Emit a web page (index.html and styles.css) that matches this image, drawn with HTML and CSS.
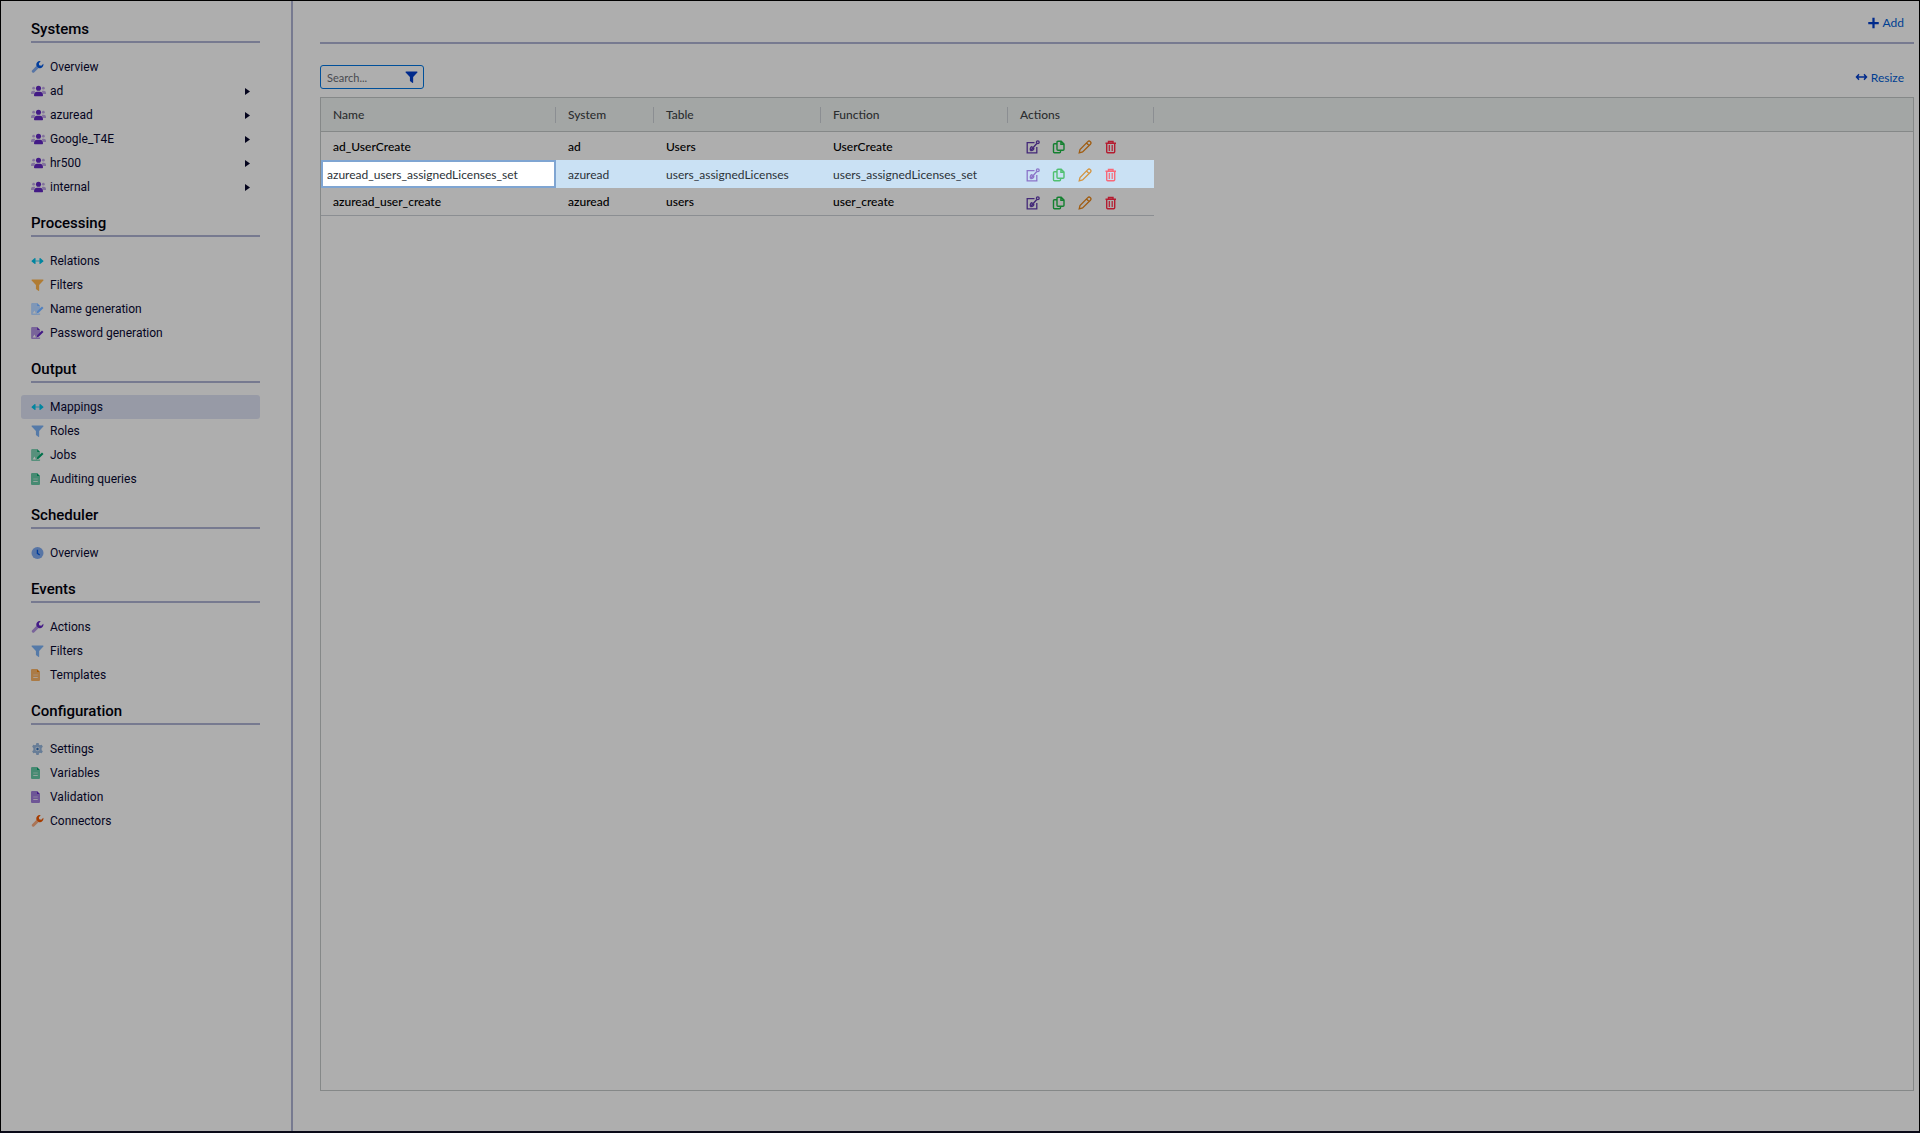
FILE: index.html
```html
<!DOCTYPE html>
<html lang="en">
<head>
<meta charset="utf-8">
<title>Mappings</title>
<link rel="stylesheet" href="styles.css">
</head>
<body>
<svg class="sprite" aria-hidden="true">
  <symbol id="wrench" viewBox="0 0 16 16"><path opacity=".5" d="M7.4 5.8 1 12.2a1.9 1.9 0 0 0 2.800 2.800L10.200 8.600z"/><path d="M15.700 3.700a4.600 4.600 0 0 1-6.200 5.500L6.800 6.500A4.600 4.600 0 0 1 12.300.300L9.800 2.900l.400 2.900 2.900.400z"/></symbol>
  <symbol id="users" viewBox="0 0 20 16"><g opacity=".4"><circle cx="3.500" cy="4.200" r="1.800"/><circle cx="16.500" cy="4.200" r="1.800"/><path d="M0 10.500C0 8.500 1.500 7.500 3 7.500h2l.500 1.500L3.500 12H0zM20 10.500c0-2-1.500-3-3-3h-2L14.500 9l2 3H20z"/></g><circle cx="10" cy="4.300" r="3.400"/><path d="M4 14c0-3.500 1.500-5 4-5h4c2.500 0 4 1.500 4 5 0 .700-.400 1-1 1H5c-.600 0-1-.300-1-1z"/></symbol>
  <symbol id="arrows" viewBox="0 0 16 16"><path opacity=".5" d="M5 7h6v2H5z"/><path d="M.200 7.500 4 4.200c.700-.500 1.400-.200 1.400.600v6.400c0 .800-.700 1.100-1.400.600L.200 8.500q-.400-.500 0-1zM15.800 7.500 12 4.200c-.700-.500-1.400-.200-1.400.600v6.400c0 .800.700 1.100 1.400.600l3.800-3.300q.400-.500 0-1z"/></symbol>
  <symbol id="resize" viewBox="0 0 16 16"><path d="M0 8l4-4.200 1.300 1.300L3.800 7h8.400l-1.500-1.900L12 3.800 16 8l-4 4.200-1.300-1.300L12.200 9H3.800l1.500 1.900L4 12.200z"/></symbol>
  <symbol id="filter" viewBox="0 0 16 16"><path d="M.800.500h14.400c.800 0 1.100.800.600 1.400L10.200 8v7.200c0 .700-.600 1-1.200.600l-2.600-2c-.300-.200-.500-.500-.500-.900V8L.200 1.900C-.300 1.300 0 .500.800.500z"/></symbol>
  <symbol id="filepen" viewBox="0 0 17 16"><path opacity=".5" fill-rule="evenodd" d="M1.500 0H8v4h4v3.500L7.500 12v2H12v1a1 1 0 0 1-1 1H1.500A1.500 1.500 0 0 1 0 14.500v-13A1.500 1.500 0 0 1 1.500 0zM2 14h4.500L4.500 10z"/><path d="M8 0l4 4H8zM14.500 4.500 16.500 6.500 10 13l-2.500.700.500-2.700z"/></symbol>
  <symbol id="file" viewBox="0 0 12 16"><path opacity=".6" fill-rule="evenodd" d="M1.500 0H8v4h4v10.500a1.500 1.500 0 0 1-1.500 1.500h-9A1.500 1.500 0 0 1 0 14.500v-13A1.500 1.500 0 0 1 1.500 0zM3 7.700v.700h6v-.700zM3 11v1h6v-1z"/><path d="M8 0l4 4H8z"/></symbol>
  <symbol id="clock" viewBox="0 0 16 16"><circle opacity=".5" cx="8" cy="8" r="8"/><path d="M7 3.500h1.800V8l2.600 2-.900 1.400L7 9z"/></symbol>
  <symbol id="gear" viewBox="0 0 16 16"><path opacity=".5" fill-rule="evenodd" d="M6.500 0h3l.500 2.300 1.300.700 2.300-.700 1.500 2.600L13.500 6.500v3l1.600 1.600-1.500 2.600-2.300-.700-1.300.700-.500 2.300h-3L6 13.700 4.700 13l-2.300.700-1.500-2.600 1.600-1.600v-3L.900 4.900l1.500-2.600L4.700 3 6 2.300zM8 5a3 3 0 1 0 0 6 3 3 0 0 0 0-6z"/><circle opacity=".2" cx="8" cy="8" r="3"/><circle cx="8" cy="8" r="1.600"/></symbol>
  <symbol id="plus" viewBox="0 0 16 16"><path d="M6.500 1h3v5.500H15v3H9.500V15h-3V9.500H1v-3h5.500z"/></symbol>
  <symbol id="caret" viewBox="0 0 5 7"><path d="M0 0 5 3.500 0 7z"/></symbol>
  <symbol id="edit" viewBox="0 0 14 14"><g fill="none" stroke="currentColor" stroke-width="1.300"><path d="M8.500 2.700H1.200v10.100h9.600V7M4.500 10.500c-.800-2 .300-4 2-3.700M4.500 10.500c2 .300 3.700-.800 3.300-2.500M5 10l5.800-6.500"/><circle cx="11.800" cy="2.200" r="1.400"/></g></symbol>
  <symbol id="copy" viewBox="0 0 14 14"><g fill="none" stroke="currentColor" stroke-width="1.400"><path d="M6 1.200h3.200l2.800 2.800v5.300c0 .700-.300 1-1 1H6c-.700 0-1-.300-1-1V2.200c0-.700.300-1 1-1zM8.900 1.200v3.100H12M4.800 3.700H2.500c-.700 0-1 .300-1 1v7.100c0 .700.300 1 1 1H7.500c.700 0 1-.300 1-1V10.500"/></g></symbol>
  <symbol id="pencil" viewBox="0 0 14 14"><g fill="none" stroke="currentColor" stroke-width="1.300"><path d="M1.200 12.800 2 9.500l7.800-7.900c1.700-1.600 4.200.800 2.600 2.600L4.600 12zM8.500 3l2.500 2.500"/></g></symbol>
  <symbol id="trash" viewBox="0 0 14 14"><g fill="none" stroke="currentColor" stroke-width="1.400"><path d="M1.500 3.200h10.500M4.500 3V1.500h4.500V3M2.700 3.500v8.300c0 .700.300 1 1 1h6c.700 0 1-.300 1-1V3.500"/><path stroke-width="1.200" d="M5.300 5v6M8.200 5v6"/></g></symbol>
</svg>
<div class="app">
  <nav class="sidebar">
    <h2>Systems</h2>
    <ul>
      <li><a href="#"><svg class="icon blue"><use href="#wrench"/></svg>Overview</a></li>
      <li><a href="#"><svg class="icon wide purple"><use href="#users"/></svg>ad<svg class="caret"><use href="#caret"/></svg></a></li>
      <li><a href="#"><svg class="icon wide purple"><use href="#users"/></svg>azuread<svg class="caret"><use href="#caret"/></svg></a></li>
      <li><a href="#"><svg class="icon wide purple"><use href="#users"/></svg>Google_T4E<svg class="caret"><use href="#caret"/></svg></a></li>
      <li><a href="#"><svg class="icon wide purple"><use href="#users"/></svg>hr500<svg class="caret"><use href="#caret"/></svg></a></li>
      <li><a href="#"><svg class="icon wide purple"><use href="#users"/></svg>internal<svg class="caret"><use href="#caret"/></svg></a></li>
    </ul>
    <h2>Processing</h2>
    <ul>
      <li><a href="#"><svg class="icon cyan"><use href="#arrows"/></svg>Relations</a></li>
      <li><a href="#"><svg class="icon sand"><use href="#filter"/></svg>Filters</a></li>
      <li><a href="#"><svg class="icon sky"><use href="#filepen"/></svg>Name generation</a></li>
      <li><a href="#"><svg class="icon purple"><use href="#filepen"/></svg>Password generation</a></li>
    </ul>
    <h2>Output</h2>
    <ul>
      <li><a href="#" class="active" aria-current="page"><svg class="icon cyan"><use href="#arrows"/></svg>Mappings</a></li>
      <li><a href="#"><svg class="icon steel"><use href="#filter"/></svg>Roles</a></li>
      <li><a href="#"><svg class="icon green"><use href="#filepen"/></svg>Jobs</a></li>
      <li><a href="#"><svg class="icon narrow green"><use href="#file"/></svg>Auditing queries</a></li>
    </ul>
    <h2>Scheduler</h2>
    <ul>
      <li><a href="#"><svg class="icon blue"><use href="#clock"/></svg>Overview</a></li>
    </ul>
    <h2>Events</h2>
    <ul>
      <li><a href="#"><svg class="icon purple"><use href="#wrench"/></svg>Actions</a></li>
      <li><a href="#"><svg class="icon steel"><use href="#filter"/></svg>Filters</a></li>
      <li><a href="#"><svg class="icon narrow orange"><use href="#file"/></svg>Templates</a></li>
    </ul>
    <h2>Configuration</h2>
    <ul>
      <li><a href="#"><svg class="icon navy"><use href="#gear"/></svg>Settings</a></li>
      <li><a href="#"><svg class="icon narrow green"><use href="#file"/></svg>Variables</a></li>
      <li><a href="#"><svg class="icon narrow purple"><use href="#file"/></svg>Validation</a></li>
      <li><a href="#"><svg class="icon rust"><use href="#wrench"/></svg>Connectors</a></li>
    </ul>
  </nav>
  <main class="main">
    <header class="topbar">
      <button type="button" class="link"><svg class="icon"><use href="#plus"/></svg>Add</button>
    </header>
    <div class="toolbar">
      <div class="search">
        <input type="text" placeholder="Search..." aria-label="Search">
        <svg class="icon"><use href="#filter"/></svg>
      </div>
      <button type="button" class="link"><svg class="icon"><use href="#resize"/></svg>Resize</button>
    </div>
    <div class="grid">
      <table>
        <colgroup><col class="c-name"><col class="c-system"><col class="c-table"><col class="c-function"><col class="c-actions"><col></colgroup>
        <thead>
          <tr><th><div>Name</div></th><th><div>System</div></th><th><div>Table</div></th><th><div>Function</div></th><th><div>Actions</div></th><td></td></tr>
        </thead>
        <tbody>
          <tr>
            <td>ad_UserCreate</td><td>ad</td><td>Users</td><td>UserCreate</td>
            <td><div class="actions"><button type="button" class="edit" aria-label="Edit"><svg><use href="#edit"/></svg></button><button type="button" class="copy" aria-label="Copy"><svg><use href="#copy"/></svg></button><button type="button" class="rename" aria-label="Rename"><svg><use href="#pencil"/></svg></button><button type="button" class="delete" aria-label="Delete"><svg><use href="#trash"/></svg></button></div></td><td class="rest"></td>
          </tr>
          <tr class="selected">
            <td class="editing"><input type="text" value="azuread_users_assignedLicenses_set" aria-label="Name"></td><td>azuread</td><td>users_assignedLicenses</td><td>users_assignedLicenses_set</td>
            <td><div class="actions"><button type="button" class="edit" aria-label="Edit"><svg><use href="#edit"/></svg></button><button type="button" class="copy" aria-label="Copy"><svg><use href="#copy"/></svg></button><button type="button" class="rename" aria-label="Rename"><svg><use href="#pencil"/></svg></button><button type="button" class="delete" aria-label="Delete"><svg><use href="#trash"/></svg></button></div></td><td class="rest"></td>
          </tr>
          <tr>
            <td>azuread_user_create</td><td>azuread</td><td>users</td><td>user_create</td>
            <td><div class="actions"><button type="button" class="edit" aria-label="Edit"><svg><use href="#edit"/></svg></button><button type="button" class="copy" aria-label="Copy"><svg><use href="#copy"/></svg></button><button type="button" class="rename" aria-label="Rename"><svg><use href="#pencil"/></svg></button><button type="button" class="delete" aria-label="Delete"><svg><use href="#trash"/></svg></button></div></td><td class="rest"></td>
          </tr>
        </tbody>
      </table>
    </div>
  </main>
</div>
</body>
</html>
```
FILE: styles.css
```css
* { box-sizing: border-box; }
body {
  margin: 0;
  background: #aeaeae;
  color: #05051e;
  font-family: Lato, "Open Sans", sans-serif;
  font-size: 12px;
}
.sprite { position: absolute; width: 0; height: 0; }
svg { fill: currentColor; flex: none; }
button, input { font: inherit; color: inherit; }
button { background: none; border: 0; padding: 0; cursor: pointer; }

.app {
  display: flex;
  min-height: 100vh;
  border: 1px solid #000;
  border-bottom: 2px solid #0a0a18;
}

/* Sidebar */
.sidebar {
  width: 292px;
  flex: none;
  padding: 4px 31px 24px 20px;
  border-right: 2px solid #777a90;
  font-family: Roboto, "Open Sans", sans-serif;
}
h2 {
  margin: 12px 0 12px 10px;
  border-bottom: 2px solid #777a90;
  font-size: 15px;
  font-weight: 500;
  line-height: 24px;
  color: #000008;
}
ul { margin: 0; padding: 0; list-style: none; }
.sidebar a {
  display: flex;
  align-items: center;
  height: 24px;
  padding: 0 10px;
  border-radius: 3px;
  color: inherit;
  text-decoration: none;
}
.sidebar a.active { background: #979aa6; }
.icon { width: 13px; height: 12px; margin-right: 6px; }
.icon.wide { width: 15px; margin-right: 4px; }
.icon.narrow { width: 9px; margin-right: 10px; }
.caret { width: 5px; height: 7px; margin-left: auto; }

.blue { color: #003c9c; }
.purple { color: #431a86; }
.cyan { color: #0085a0; }
.sand { color: #b07c34; }
.sky { color: #5080c0; }
.steel { color: #557aa8; }
.green { color: #00714a; }
.orange { color: #a85800; }
.navy { color: #204c80; }
.rust { color: #a63c00; }

/* Main area */
.main {
  flex: 1;
  min-width: 0;
  display: flex;
  flex-direction: column;
  padding: 0 5px 40px 27px;
}
.topbar {
  display: flex;
  justify-content: flex-end;
  align-items: center;
  height: 43px;
  padding: 2px 10px 0;
  border-bottom: 2px solid #777a90;
}
.toolbar {
  display: flex;
  justify-content: space-between;
  align-items: center;
  padding: 21px 10px 8px 0;
}
.link { display: flex; align-items: center; color: #003e92; }
.link .icon { margin-right: 3px; color: #002a8c; }
.search {
  display: flex;
  align-items: center;
  width: 104px;
  height: 24px;
  padding: 0 5px 0 6px;
  border: 1px solid #00509a;
  border-radius: 3px;
}
.search input { flex: 1; min-width: 0; padding: 0; border: 0; background: none; outline: 0; font-size: 11px; }
.search input::placeholder { color: #484a50; opacity: 1; }
.search .icon { margin: 0; color: #002a8c; }

/* Data grid */
.grid { flex: 1; border: 1px solid #858888; }
table { width: 100%; border-collapse: separate; border-spacing: 0; table-layout: fixed; }
.c-name { width: 235px; }
.c-system { width: 98px; }
.c-table { width: 167px; }
.c-function { width: 187px; }
.c-actions { width: 146px; }
thead tr { height: 34px; background: #a3a6a5; color: #2c2e30; }
th { padding: 0; text-align: left; font-weight: 500; border-bottom: 1px solid #858888; }
thead td { border-bottom: 1px solid #858888; }
th div { padding-left: 12px; line-height: 16px; border-right: 1px solid #8b8e92; }
tbody tr { height: 28px; color: #000; font-weight: 500; }
tbody td { padding: 0 0 0 12px; white-space: nowrap; }
tbody tr:last-child td { border-bottom: 1px solid #8b8e92; }
tbody td.rest, tbody tr:last-child td.rest { border: 0; background: none; }
.selected td { background: #cae1f4; color: #2c3238; font-weight: 400; }
.selected td.editing { padding: 0; }
.editing input {
  display: block;
  width: 100%;
  height: 28px;
  padding: 0 4px;
  border: 2px solid #7fa5d2;
  border-radius: 0;
  background: #fff;
  outline: 0;
}
.actions { display: flex; align-items: center; gap: 12px; padding: 2px 0 0 6px; }
.actions button { display: flex; }
.actions svg { width: 14px; height: 14px; }
.edit { color: #432878; }
.copy { color: #148030; }
.rename { color: #a05c10; }
.delete { color: #b41c30; }
.selected .edit { color: #8c74c8; }
.selected .copy { color: #50c070; }
.selected .rename { color: #d49440; }
.selected .delete { color: #f86878; }
```
